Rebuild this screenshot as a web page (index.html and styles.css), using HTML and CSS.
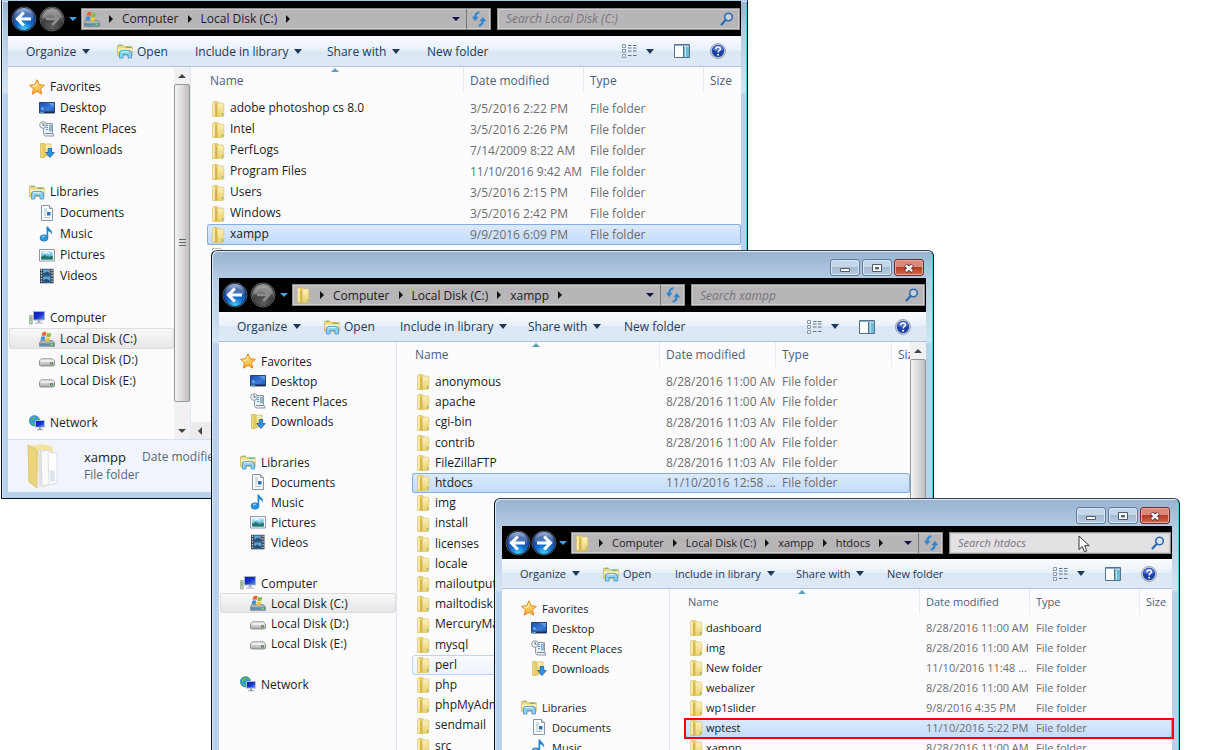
FILE: index.html
```html
<!DOCTYPE html>
<html lang="en">
<head>
<meta charset="utf-8">
<title>Explorer</title>
<link rel="stylesheet" href="styles.css">
</head>
<body>
<svg class="sprite" aria-hidden="true">
  <defs>
    <linearGradient id="gFold" x1="0" x2="1" y1="0" y2="0"><stop offset="0" stop-color="#f6e9a0"/><stop offset=".5" stop-color="#e3c65a"/><stop offset="1" stop-color="#f3df8c"/></linearGradient>
    <linearGradient id="gFold2" x1="0" x2="0" y1="0" y2="1"><stop offset="0" stop-color="#fbf2b8"/><stop offset="1" stop-color="#ecd06a"/></linearGradient>
    <radialGradient id="gBlue" cx=".5" cy=".95" r=".95"><stop offset="0" stop-color="#3fd0ff"/><stop offset=".4" stop-color="#1467c8"/><stop offset=".75" stop-color="#1d4596"/><stop offset="1" stop-color="#a9c0e6"/></radialGradient>
    <radialGradient id="gGray" cx=".5" cy=".9" r=".95"><stop offset="0" stop-color="#5c5c5c"/><stop offset=".5" stop-color="#404040"/><stop offset="1" stop-color="#a2a2a2"/></radialGradient>
    <linearGradient id="gStar" x1="0" x2="0" y1="0" y2="1"><stop offset="0" stop-color="#ffe98a"/><stop offset="1" stop-color="#fbab2c"/></linearGradient>
    <linearGradient id="gDesk" x1="0" x2="1" y1="0" y2="1"><stop offset="0" stop-color="#1c4fae"/><stop offset=".6" stop-color="#3a7bd8"/><stop offset="1" stop-color="#1b4ba6"/></linearGradient>
    <linearGradient id="gScr" x1="0" x2="1" y1="0" y2="1"><stop offset="0" stop-color="#0d1fa8"/><stop offset=".5" stop-color="#1530d0"/><stop offset="1" stop-color="#6aa0f0"/></linearGradient>
    <linearGradient id="gDisk" x1="0" x2="0" y1="0" y2="1"><stop offset="0" stop-color="#f4f4f4"/><stop offset="1" stop-color="#a9a9a9"/></linearGradient>
    <linearGradient id="gSea" x1="0" x2="0" y1="0" y2="1"><stop offset="0" stop-color="#bfe6f8"/><stop offset=".5" stop-color="#6fc0dc"/><stop offset="1" stop-color="#1b6f7a"/></linearGradient>
  </defs>
  <symbol id="folder" viewBox="0 0 16 16">
    <path d="M2.5 1.5l1-1h4l1 1v13l-1 1h-5z" fill="url(#gFold)" stroke="#d6bd5c" stroke-width=".6"/>
    <path d="M7 3l1-1h5l.8.8v12l-.8.6H7z" fill="url(#gFold2)" stroke="#d6bd5c" stroke-width=".6"/>
    <path d="M7.2 3v12l-2 .6V4.4z" fill="#cfae3e" opacity=".75"/>
    <path d="M4 1.4v13" stroke="#fff8d0" stroke-width="1"/>
    <path d="M12.6 12v2.4" stroke="#7fc08a" stroke-width="1.2"/>
  </symbol>
  <symbol id="library" viewBox="0 0 16 16">
    <path d="M.6 2.4h5l1 1.2h8.6v9H.6z" fill="#f0d981" stroke="#cdb258" stroke-width=".8"/>
    <path d="M2 2.2h3.6M9 4.4h5" stroke="#6db36a" stroke-width="1"/>
    <path d="M1 5.4h14.2v3H1z" fill="#fbf3c1"/>
    <path d="M2.5 15V10q0-2.6 2.6-2.6h6.800q2.600 0 2.600 2.600v5h-3.500v-3.500H6v3.500z" fill="#8fd0f2" stroke="#3f93c6" stroke-width=".8"/>
    <path d="M4 9.4q.5-.8 1.500-.8h6" stroke="#dff4ff" stroke-width="1" fill="none"/>
  </symbol>
  <symbol id="star" viewBox="0 0 16 16">
    <path d="M8 .8l2.200 4.900 5.200.6-3.900 3.500 1.200 5.300L8 12.400l-4.700 2.700 1.200-5.300L.6 6.300l5.200-.6z" fill="url(#gStar)" stroke="#e08220" stroke-width="1" stroke-linejoin="round"/>
    <path d="M8 3.500L6.800 7l-3.400.3" stroke="#fff7c8" fill="none"/>
  </symbol>
  <symbol id="desktop" viewBox="0 0 16 16">
    <path d="M.5 2.500h15v10.500H.5z" fill="url(#gDesk)" stroke="#28456f"/>
    <path d="M1 11.500h14v1.500H1z" fill="#1a2c50"/><path d="M2 8.500l1.500-1.500 1.500 1.500-1.500 1.500z" fill="#7dbbe8"/><path d="M1 12.300h4" stroke="#6ab3e2"/>
    <path d="M9 3l6 4V3z" fill="#7db1ee" opacity=".6"/>
  </symbol>
  <symbol id="recent" viewBox="0 0 16 16">
    <path d="M4.500 2.500h9v9l1.500 3.500H6l-1.500-2z" fill="#e9eff4" stroke="#8d9aa6"/>
    <path d="M7 4.500h2M7 6.500h2M7 8.500h2" stroke="#5c9fd0"/><path d="M10.500 4h2v6h-2z" fill="#9cc8e4" stroke="#6a90aa" stroke-width=".6"/><path d="M6 12.500h8" stroke="#7d8c98"/>
    <circle cx="4" cy="4" r="3.300" fill="#f5f7f9" stroke="#8b98a5"/><path d="M4 2v2.200h1.800" stroke="#4f6274" fill="none"/>
  </symbol>
  <symbol id="downloads" viewBox="0 0 16 16">
    <path d="M1.500 1.500h4l1 1v12l-1 1h-4z" fill="url(#gFold)" stroke="#cfb24c" stroke-width=".7"/>
    <path d="M6 3l1-1h5v11l-1 1H6z" fill="url(#gFold2)" stroke="#cfb24c" stroke-width=".7"/>
    <path d="M9.300 6.500h3.400v4h2.500L11 15.600 6.800 10.500h2.500z" fill="#2f93e6" stroke="#1560a8" stroke-width=".8"/>
  </symbol>
  <symbol id="document" viewBox="0 0 16 16">
    <path d="M2.500.5h8l3 3v12h-11z" fill="#fafcfe" stroke="#8895a2"/><path d="M10.500.5v3h3" fill="#d6e0ea" stroke="#8895a2"/>
    <path d="M5 4h3M5 6h3M5 8h2M5 10h2M5 12.500h6" stroke="#a9bccd"/><path d="M8 7h3.500v3.500H8z" fill="#2c73b4"/>
  </symbol>
  <symbol id="music" viewBox="0 0 16 16">
    <ellipse cx="5" cy="12" rx="4" ry="3.200" fill="#2e96dc" stroke="#1a6bb0" stroke-width=".6"/>
    <path d="M7.500 12V.6h1.700c.3 2.600 5 3 3.800 8.400-.4-2.400-1.800-3.400-3.800-3.800V12z" fill="#2486cf"/><path d="M3 11.300q1-1.400 2.800-1" stroke="#b7e2fb" fill="none"/>
  </symbol>
  <symbol id="picture" viewBox="0 0 16 16">
    <path d="M.5 2.500h15v11.500H.5z" fill="#fff" stroke="#8b98a5"/><path d="M2.200 4.200h11.600v8.200H2.200z" fill="url(#gSea)"/>
    <path d="M2.200 10l3.500-2 3.500 2 4.600-1v3.400H2.200z" fill="#22786e"/><path d="M4 6q3-1.500 6 .4" stroke="#fff" fill="none"/>
  </symbol>
  <symbol id="video" viewBox="0 0 16 16">
    <path d="M1 .8h13.500v14.500H1z" fill="#34424e"/><path d="M4.200 1.400h7.200v6H4.200zM4.200 8.500h7.200v6H4.200z" fill="#58a9dc"/>
    <path d="M4.200 5.400l4-2 3.200 2v2H4.200zM4.200 12.500l3-2 4.200 2.500v1.500H4.200z" fill="#274f7a"/><path d="M9.500 2l1.900 1v3z" fill="#d4574a"/>
    <path d="M2.500 1.500v14M13 1.500v14" stroke="#cfd9e0" stroke-width="1.300" stroke-dasharray="1.400 1.400"/>
  </symbol>
  <symbol id="computer" viewBox="0 0 16 16">
    <path d="M.6 5.500h2.600v8.500H.6z" fill="#c9d2c9" stroke="#8b958b" stroke-width=".7"/><path d="M1.900 7v4" stroke="#62b652"/>
    <path d="M4.500 1.500h11v8.500h-11z" fill="url(#gScr)" stroke="#a7b2c2"/><path d="M8.500 10.500h3v2h-3z" fill="#9aa4b2"/><path d="M6 12.500h8v1.300H6z" fill="#b9c2cd"/>
  </symbol>
  <symbol id="sysdisk" viewBox="0 0 16 16">
    <path d="M2 9.500h11.500l2 2.500v3.300H.5V12z" fill="#a9b4b8" stroke="#66757c" stroke-width=".7"/><path d="M1 12.300h14v2.500H1z" fill="#5e8ea6"/><path d="M11.500 13.500h2.500" stroke="#74e052" stroke-width="1.300"/>
    <path d="M3.500 1.500q2-1.500 4 0L6.600 5q-2-1.200-4 0z" fill="#e9602c"/><path d="M8.200 1.800q2 1.200 4.200 0l-1 3.600q-2 1.200-4.100 0z" fill="#86bb3a"/>
    <path d="M2.400 5.800q2-1.300 4 0l-.9 3.500q-2-1.200-4 0z" fill="#3f8edc"/><path d="M7.100 6.200q2 1.200 4.200 0l-1 3.500q-2 1.200-4.100 0z" fill="#f5c32c"/>
  </symbol>
  <symbol id="disk" viewBox="0 0 16 16">
    <path d="M2.500 6.800h11l2 2.200v4l-1 1H1.500l-1-1V9z" fill="url(#gDisk)" stroke="#7c7c7c" stroke-width=".8"/>
    <path d="M1.500 9h13" stroke="#fff"/><path d="M11 10.300h3v2.200h-3z" fill="#5c6a5c"/><path d="M12.500 11v1" stroke="#6ee05a" stroke-width="1.400"/>
  </symbol>
  <symbol id="network" viewBox="0 0 16 16">
    <circle cx="5.500" cy="5.800" r="5.200" fill="#2f9ad6" stroke="#2275ab" stroke-width=".6"/><path d="M2 2.800q3-2.600 5-.8L5 4.500 2.200 6zM2 8q3-1.500 4 1.500L4.500 10.500zM8 1.200l2.500 3H8z" fill="#59bd4d"/>
    <path d="M6.500 5.500h9v6.700h-9z" fill="url(#gScr)" stroke="#b9c5d2" stroke-width=".9"/><path d="M10 12.500h2v1.800h-2zM8 14.200h6v1H8z" fill="#8e9aa8"/>
  </symbol>
  <symbol id="file" viewBox="0 0 16 16"><path d="M2.500.5h8l3 3v12h-11z" fill="#fff" stroke="#a3a3a3" stroke-dasharray="2 1"/></symbol>
  <symbol id="back" viewBox="0 0 26 26">
    <circle cx="13" cy="13" r="12" fill="#07111f" stroke="#5e6c80" stroke-width=".8"/><circle cx="13" cy="13" r="11" fill="url(#gBlue)"/>
    <path d="M3.500 12A9.600 9.600 0 0 1 22.500 12q-9 2.500-19 0z" fill="#fff" opacity=".22"/>
    <path d="M12.800 6.500L6.500 13l6.300 6.500M7.500 13H20" stroke="#fff" stroke-width="3.200" fill="none"/>
  </symbol>
  <symbol id="forward" viewBox="0 0 26 26">
    <circle cx="13" cy="13" r="12" fill="#07111f" stroke="#5e6c80" stroke-width=".8"/><circle cx="13" cy="13" r="11" fill="url(#gBlue)"/>
    <path d="M3.500 12A9.600 9.600 0 0 1 22.500 12q-9 2.500-19 0z" fill="#fff" opacity=".22"/>
    <path d="M13.200 6.500l6.300 6.500-6.300 6.500M18.500 13H6" stroke="#fff" stroke-width="3.200" fill="none"/>
  </symbol>
  <symbol id="forward-off" viewBox="0 0 26 26">
    <circle cx="13" cy="13" r="12" fill="#111" stroke="#777" stroke-width=".8"/><circle cx="13" cy="13" r="11" fill="url(#gGray)"/>
    <path d="M3.500 12A9.600 9.600 0 0 1 22.500 12q-9 2.500-19 0z" fill="#fff" opacity=".25"/>
    <path d="M13.200 7l5.800 6-5.800 6M18 13H7" stroke="#8d8d8d" stroke-width="2.600" fill="none"/>
  </symbol>
  <symbol id="refresh" viewBox="0 0 16 16">
    <path d="M8.300 1.300Q4.200 2 4.200 6.800M7.700 14.700q4.100-.7 4.100-5.500" stroke="#2f84cc" stroke-width="2" fill="none"/>
    <path d="M.8 5.800h6.800L4.200 10zM8.400 10.200h6.800L11.800 6z" fill="#2f84cc"/>
  </symbol>
  <symbol id="search" viewBox="0 0 16 16">
    <circle cx="9.500" cy="6" r="3.800" fill="#dcecf8" fill-opacity=".5" stroke="#2b6cb0" stroke-width="1.600"/><path d="M6.700 9L2.500 13.500" stroke="#2b6cb0" stroke-width="2.200" stroke-linecap="round"/>
  </symbol>
  <symbol id="views" viewBox="0 0 16 16">
    <path d="M1.500 1.500h3v3h-3zM1.500 6.500h3v3h-3zM1.500 11.500h3v3h-3z" fill="#eef2f6" stroke="#8c99a8"/>
    <path d="M7 2.500h3.500M12 2.500h3.500M7 5h3.500M12 5h3.500M7 8h3.500M12 8h3.500M7 12.500h3.500M12 12.500h3.500" stroke="#5f7088"/>
  </symbol>
  <symbol id="pane" viewBox="0 0 16 16">
    <path d="M.5 1.500h15v13H.5z" fill="#fbfdff" stroke="#54718f"/><path d="M1 2.500h14" stroke="#8fa9c2"/><path d="M9.500 3v11.500" stroke="#54718f"/><path d="M10 3.500h5v10.500h-5z" fill="#6fbbd6"/><path d="M11.500 4v10" stroke="#b9e3ef"/>
  </symbol>
  <symbol id="help" viewBox="0 0 16 16">
    <circle cx="8" cy="8" r="7.500" fill="#d5d9e2" stroke="#8890a0" stroke-width=".8"/><circle cx="8" cy="8" r="6.200" fill="#1d3fa8"/><path d="M2.600 7a5.500 5.500 0 0 1 10.800 0q-5 2-10.800 0z" fill="#6f8fe0" opacity=".7"/>
    <path d="M5.800 6.300q.1-2.300 2.300-2.300 2.200 0 2.200 2 0 1.300-1.300 1.900-.9.400-.9 1.600" stroke="#fff" stroke-width="1.500" fill="none"/><circle cx="8.100" cy="11.700" r="1" fill="#fff"/>
  </symbol>
  <symbol id="minimize" viewBox="0 0 16 16"><path d="M3.500 8.500h9v3h-9z" fill="#fff" stroke="#4c5a6c"/></symbol>
  <symbol id="maximize" viewBox="0 0 16 16"><path d="M3.500 4.500h9v7h-9z" fill="#fff" stroke="#4c5a6c"/><path d="M6.500 7.500h3v1.500h-3z" fill="#7d93ad" stroke="#4c5a6c"/></symbol>
  <symbol id="close" viewBox="0 0 16 16"><path d="M4.500 5l7 6.500M11.500 5l-7 6.500" stroke="#5c3038" stroke-width="4"/><path d="M4.800 5.300l6.400 5.900M11.200 5.300l-6.400 5.900" stroke="#fff" stroke-width="2.300"/></symbol>
</svg>

<main class="desktop">

  <section class="window window-c" aria-label="Local Disk (C:)">
    <div class="navbar">
      <button class="round" aria-label="Back"><svg><use href="#back"/></svg></button>
      <button class="round" aria-label="Forward"><svg><use href="#forward-off"/></svg></button>
      <button class="history tri" aria-label="Recent pages"></button>
      <div class="address">
        <svg class="icon"><use href="#sysdisk"/></svg>
        <button class="crumb">Computer</button><button class="crumb">Local Disk (C:)</button><span class="crumb-end"></span>
        <button class="drop tri" aria-label="Previous locations"></button>
        <button class="refresh" aria-label="Refresh"><svg class="icon"><use href="#refresh"/></svg></button>
      </div>
      <label class="search"><input type="text" aria-label="Search" placeholder="Search Local Disk (C:)"><svg class="icon"><use href="#search"/></svg></label>
    </div>
    <div class="toolbar">
      <button class="menu">Organize</button>
      <button class="open"><svg class="icon"><use href="#library"/></svg>Open</button>
      <button class="menu">Include in library</button>
      <button class="menu">Share with</button>
      <button>New folder</button>
      <div class="tools">
        <button class="menu views" aria-label="Views"><svg class="icon"><use href="#views"/></svg></button>
        <button aria-label="Preview pane"><svg class="icon"><use href="#pane"/></svg></button>
        <button aria-label="Help"><svg class="icon"><use href="#help"/></svg></button>
      </div>
    </div>
    <div class="body">
      <nav class="sidebar">
        <ul>
          <li><a href="#"><svg class="icon"><use href="#star"/></svg>Favorites</a></li>
          <li class="sub"><a href="#"><svg class="icon"><use href="#desktop"/></svg>Desktop</a></li>
          <li class="sub"><a href="#"><svg class="icon"><use href="#recent"/></svg>Recent Places</a></li>
          <li class="sub"><a href="#"><svg class="icon"><use href="#downloads"/></svg>Downloads</a></li>
        </ul>
        <ul>
          <li><a href="#"><svg class="icon"><use href="#library"/></svg>Libraries</a></li>
          <li class="sub"><a href="#"><svg class="icon"><use href="#document"/></svg>Documents</a></li>
          <li class="sub"><a href="#"><svg class="icon"><use href="#music"/></svg>Music</a></li>
          <li class="sub"><a href="#"><svg class="icon"><use href="#picture"/></svg>Pictures</a></li>
          <li class="sub"><a href="#"><svg class="icon"><use href="#video"/></svg>Videos</a></li>
        </ul>
        <ul>
          <li><a href="#"><svg class="icon"><use href="#computer"/></svg>Computer</a></li>
          <li class="sub current"><a href="#"><svg class="icon"><use href="#sysdisk"/></svg>Local Disk (C:)</a></li>
          <li class="sub"><a href="#"><svg class="icon"><use href="#disk"/></svg>Local Disk (D:)</a></li>
          <li class="sub"><a href="#"><svg class="icon"><use href="#disk"/></svg>Local Disk (E:)</a></li>
        </ul>
        <ul>
          <li><a href="#"><svg class="icon"><use href="#network"/></svg>Network</a></li>
        </ul>
      </nav>
      <div class="scrollbar"><span class="arrow up"></span><span class="thumb"><i></i></span><span class="arrow down"></span></div>
      <div class="files">
        <table>
          <colgroup><col class="c-name"><col class="c-date"><col class="c-type"><col></colgroup>
          <thead><tr><th class="sorted">Name</th><th>Date modified</th><th>Type</th><th>Size</th></tr></thead>
          <tbody>
            <tr><td><svg class="icon"><use href="#folder"/></svg>adobe photoshop cs 8.0</td><td>3/5/2016 2:22 PM</td><td>File folder</td><td></td></tr>
            <tr><td><svg class="icon"><use href="#folder"/></svg>Intel</td><td>3/5/2016 2:26 PM</td><td>File folder</td><td></td></tr>
            <tr><td><svg class="icon"><use href="#folder"/></svg>PerfLogs</td><td>7/14/2009 8:22 AM</td><td>File folder</td><td></td></tr>
            <tr><td><svg class="icon"><use href="#folder"/></svg>Program Files</td><td>11/10/2016 9:42 AM</td><td>File folder</td><td></td></tr>
            <tr><td><svg class="icon"><use href="#folder"/></svg>Users</td><td>3/5/2016 2:15 PM</td><td>File folder</td><td></td></tr>
            <tr><td><svg class="icon"><use href="#folder"/></svg>Windows</td><td>3/5/2016 2:42 PM</td><td>File folder</td><td></td></tr>
            <tr class="selected"><td><svg class="icon"><use href="#folder"/></svg>xampp</td><td>9/9/2016 6:09 PM</td><td>File folder</td><td></td></tr>
            <tr><td><svg class="icon"><use href="#file"/></svg></td><td></td><td></td><td></td></tr>
          </tbody>
        </table>
        <div class="hscroll"><span class="arrow left"></span></div>
      </div>
    </div>
    <footer class="details">
      <svg class="preview" viewBox="0 0 36 48">
        <path d="M3 4l14-2 10 3v36l-10 4z" fill="#f3e3a0"/>
        <path d="M12 8l11 1 1 33-11 3z" fill="#dfe3e8"/><path d="M15 9l9-1 1 34-9 2z" fill="#fafafa" stroke="#cdd2d8" stroke-width=".7"/>
        <path d="M22 10l9 1v30l-8 2z" fill="#fff" stroke="#cdd2d8" stroke-width=".7"/><path d="M24 28l5 1v10l-5 1z" fill="#dde6ee"/>
        <path d="M2 3l9 5v38l-8-6z" fill="#ecd47c" stroke="#d6bb5e" stroke-width=".7"/>
      </svg>
      <dl><dt class="title">xampp</dt><dd>Date modified</dd><dt>File folder</dt></dl>
    </footer>
  </section>

  <section class="window window-x" aria-label="xampp">
    <div class="titlebar">
      <button aria-label="Minimize"><svg class="icon"><use href="#minimize"/></svg></button>
      <button aria-label="Maximize"><svg class="icon"><use href="#maximize"/></svg></button>
      <button class="close" aria-label="Close"><svg class="icon"><use href="#close"/></svg></button>
    </div>
    <div class="navbar">
      <button class="round" aria-label="Back"><svg><use href="#back"/></svg></button>
      <button class="round" aria-label="Forward"><svg><use href="#forward-off"/></svg></button>
      <button class="history tri" aria-label="Recent pages"></button>
      <div class="address">
        <svg class="icon"><use href="#folder"/></svg>
        <button class="crumb">Computer</button><button class="crumb">Local Disk (C:)</button><button class="crumb">xampp</button><span class="crumb-end"></span>
        <button class="drop tri" aria-label="Previous locations"></button>
        <button class="refresh" aria-label="Refresh"><svg class="icon"><use href="#refresh"/></svg></button>
      </div>
      <label class="search"><input type="text" aria-label="Search" placeholder="Search xampp"><svg class="icon"><use href="#search"/></svg></label>
    </div>
    <div class="toolbar">
      <button class="menu">Organize</button>
      <button class="open"><svg class="icon"><use href="#library"/></svg>Open</button>
      <button class="menu">Include in library</button>
      <button class="menu">Share with</button>
      <button>New folder</button>
      <div class="tools">
        <button class="menu views" aria-label="Views"><svg class="icon"><use href="#views"/></svg></button>
        <button aria-label="Preview pane"><svg class="icon"><use href="#pane"/></svg></button>
        <button aria-label="Help"><svg class="icon"><use href="#help"/></svg></button>
      </div>
    </div>
    <div class="body">
      <nav class="sidebar">
        <ul>
          <li><a href="#"><svg class="icon"><use href="#star"/></svg>Favorites</a></li>
          <li class="sub"><a href="#"><svg class="icon"><use href="#desktop"/></svg>Desktop</a></li>
          <li class="sub"><a href="#"><svg class="icon"><use href="#recent"/></svg>Recent Places</a></li>
          <li class="sub"><a href="#"><svg class="icon"><use href="#downloads"/></svg>Downloads</a></li>
        </ul>
        <ul>
          <li><a href="#"><svg class="icon"><use href="#library"/></svg>Libraries</a></li>
          <li class="sub"><a href="#"><svg class="icon"><use href="#document"/></svg>Documents</a></li>
          <li class="sub"><a href="#"><svg class="icon"><use href="#music"/></svg>Music</a></li>
          <li class="sub"><a href="#"><svg class="icon"><use href="#picture"/></svg>Pictures</a></li>
          <li class="sub"><a href="#"><svg class="icon"><use href="#video"/></svg>Videos</a></li>
        </ul>
        <ul>
          <li><a href="#"><svg class="icon"><use href="#computer"/></svg>Computer</a></li>
          <li class="sub current"><a href="#"><svg class="icon"><use href="#sysdisk"/></svg>Local Disk (C:)</a></li>
          <li class="sub"><a href="#"><svg class="icon"><use href="#disk"/></svg>Local Disk (D:)</a></li>
          <li class="sub"><a href="#"><svg class="icon"><use href="#disk"/></svg>Local Disk (E:)</a></li>
        </ul>
        <ul>
          <li><a href="#"><svg class="icon"><use href="#network"/></svg>Network</a></li>
        </ul>
      </nav>
      <div class="files">
        <table>
          <colgroup><col class="c-name"><col class="c-date"><col class="c-type"><col></colgroup>
          <thead><tr><th class="sorted">Name</th><th>Date modified</th><th>Type</th><th>Size</th></tr></thead>
          <tbody>
            <tr><td><svg class="icon"><use href="#folder"/></svg>anonymous</td><td>8/28/2016 11:00 AM</td><td>File folder</td><td></td></tr>
            <tr><td><svg class="icon"><use href="#folder"/></svg>apache</td><td>8/28/2016 11:00 AM</td><td>File folder</td><td></td></tr>
            <tr><td><svg class="icon"><use href="#folder"/></svg>cgi-bin</td><td>8/28/2016 11:03 AM</td><td>File folder</td><td></td></tr>
            <tr><td><svg class="icon"><use href="#folder"/></svg>contrib</td><td>8/28/2016 11:00 AM</td><td>File folder</td><td></td></tr>
            <tr><td><svg class="icon"><use href="#folder"/></svg>FileZillaFTP</td><td>8/28/2016 11:03 AM</td><td>File folder</td><td></td></tr>
            <tr class="selected"><td><svg class="icon"><use href="#folder"/></svg>htdocs</td><td>11/10/2016 12:58 ...</td><td>File folder</td><td></td></tr>
            <tr><td><svg class="icon"><use href="#folder"/></svg>img</td><td></td><td></td><td></td></tr>
            <tr><td><svg class="icon"><use href="#folder"/></svg>install</td><td></td><td></td><td></td></tr>
            <tr><td><svg class="icon"><use href="#folder"/></svg>licenses</td><td></td><td></td><td></td></tr>
            <tr><td><svg class="icon"><use href="#folder"/></svg>locale</td><td></td><td></td><td></td></tr>
            <tr><td><svg class="icon"><use href="#folder"/></svg>mailoutput</td><td></td><td></td><td></td></tr>
            <tr><td><svg class="icon"><use href="#folder"/></svg>mailtodisk</td><td></td><td></td><td></td></tr>
            <tr><td><svg class="icon"><use href="#folder"/></svg>MercuryMail</td><td></td><td></td><td></td></tr>
            <tr><td><svg class="icon"><use href="#folder"/></svg>mysql</td><td></td><td></td><td></td></tr>
            <tr class="hover"><td><svg class="icon"><use href="#folder"/></svg>perl</td><td></td><td></td><td></td></tr>
            <tr><td><svg class="icon"><use href="#folder"/></svg>php</td><td></td><td></td><td></td></tr>
            <tr><td><svg class="icon"><use href="#folder"/></svg>phpMyAdmin</td><td></td><td></td><td></td></tr>
            <tr><td><svg class="icon"><use href="#folder"/></svg>sendmail</td><td></td><td></td><td></td></tr>
            <tr><td><svg class="icon"><use href="#folder"/></svg>src</td><td></td><td></td><td></td></tr>
          </tbody>
        </table>
      </div>
      <div class="scrollbar"><span class="arrow up"></span><span class="thumb"></span></div>
    </div>
  </section>

  <section class="window window-h" aria-label="htdocs">
    <div class="titlebar">
      <button aria-label="Minimize"><svg class="icon"><use href="#minimize"/></svg></button>
      <button aria-label="Maximize"><svg class="icon"><use href="#maximize"/></svg></button>
      <button class="close" aria-label="Close"><svg class="icon"><use href="#close"/></svg></button>
    </div>
    <div class="navbar">
      <button class="round" aria-label="Back"><svg><use href="#back"/></svg></button>
      <button class="round" aria-label="Forward"><svg><use href="#forward"/></svg></button>
      <button class="history tri" aria-label="Recent pages"></button>
      <div class="address">
        <svg class="icon"><use href="#folder"/></svg>
        <button class="crumb">Computer</button><button class="crumb">Local Disk (C:)</button><button class="crumb">xampp</button><button class="crumb">htdocs</button><span class="crumb-end"></span>
        <button class="drop tri" aria-label="Previous locations"></button>
        <button class="refresh" aria-label="Refresh"><svg class="icon"><use href="#refresh"/></svg></button>
      </div>
      <label class="search lit"><input type="text" aria-label="Search" placeholder="Search htdocs"><svg class="icon"><use href="#search"/></svg></label>
    </div>
    <div class="toolbar">
      <button class="menu">Organize</button>
      <button class="open"><svg class="icon"><use href="#library"/></svg>Open</button>
      <button class="menu">Include in library</button>
      <button class="menu">Share with</button>
      <button>New folder</button>
      <div class="tools">
        <button class="menu views" aria-label="Views"><svg class="icon"><use href="#views"/></svg></button>
        <button aria-label="Preview pane"><svg class="icon"><use href="#pane"/></svg></button>
        <button aria-label="Help"><svg class="icon"><use href="#help"/></svg></button>
      </div>
    </div>
    <div class="body">
      <nav class="sidebar">
        <ul>
          <li><a href="#"><svg class="icon"><use href="#star"/></svg>Favorites</a></li>
          <li class="sub"><a href="#"><svg class="icon"><use href="#desktop"/></svg>Desktop</a></li>
          <li class="sub"><a href="#"><svg class="icon"><use href="#recent"/></svg>Recent Places</a></li>
          <li class="sub"><a href="#"><svg class="icon"><use href="#downloads"/></svg>Downloads</a></li>
        </ul>
        <ul>
          <li><a href="#"><svg class="icon"><use href="#library"/></svg>Libraries</a></li>
          <li class="sub"><a href="#"><svg class="icon"><use href="#document"/></svg>Documents</a></li>
          <li class="sub"><a href="#"><svg class="icon"><use href="#music"/></svg>Music</a></li>
        </ul>
      </nav>
      <div class="files">
        <table>
          <colgroup><col class="c-name"><col class="c-date"><col class="c-type"><col></colgroup>
          <thead><tr><th class="sorted">Name</th><th>Date modified</th><th>Type</th><th>Size</th></tr></thead>
          <tbody>
            <tr><td><svg class="icon"><use href="#folder"/></svg>dashboard</td><td>8/28/2016 11:00 AM</td><td>File folder</td><td></td></tr>
            <tr><td><svg class="icon"><use href="#folder"/></svg>img</td><td>8/28/2016 11:00 AM</td><td>File folder</td><td></td></tr>
            <tr><td><svg class="icon"><use href="#folder"/></svg>New folder</td><td>11/10/2016 11:48 ...</td><td>File folder</td><td></td></tr>
            <tr><td><svg class="icon"><use href="#folder"/></svg>webalizer</td><td>8/28/2016 11:00 AM</td><td>File folder</td><td></td></tr>
            <tr><td><svg class="icon"><use href="#folder"/></svg>wp1slider</td><td>9/8/2016 4:35 PM</td><td>File folder</td><td></td></tr>
            <tr class="selected"><td><svg class="icon"><use href="#folder"/></svg>wptest</td><td>11/10/2016 5:22 PM</td><td>File folder</td><td></td></tr>
            <tr><td><svg class="icon"><use href="#folder"/></svg>xampp</td><td>8/28/2016 11:00 AM</td><td>File folder</td><td></td></tr>
          </tbody>
        </table>
      </div>
    </div>
    <div class="marker"></div>
    <svg class="pointer" viewBox="0 0 12 18"><path d="M1 1v13.500l3.200-3 2.300 5.300 2.300-1-2.200-5.100h4.600z" fill="#fff" stroke="#333" stroke-linejoin="round"/></svg>
  </section>

</main>
</body>
</html>
```

FILE: styles.css
```css
* { box-sizing: border-box; }
body { margin: 0; background: #fff; font-family: "Open Sans", "Noto Sans", sans-serif; font-size: 12px; color: #1b1b1b; }
button { border: 0; padding: 0; margin: 0; background: none; font: inherit; color: inherit; text-align: left; white-space: nowrap; }
ul, dl, dd { margin: 0; padding: 0; list-style: none; }
a { color: inherit; text-decoration: none; }
.sprite { position: absolute; width: 0; height: 0; }
.icon { width: 16px; height: 16px; flex: none; display: block; }

.desktop { position: relative; height: 100vh; overflow: hidden; }

/* windows */
.window {
  position: absolute; display: flex; flex-direction: column;
  padding: 0 7px; border: 1px solid #06121a; border-top-color: #3a4450;
  background: linear-gradient(#98b2d0, #b4cbe3 28px, #d3e3f3 90px, #b9d1ea 94px);
  box-shadow: inset 1px 1px 0 #d9e8f6, inset -1px 0 0 #58c4e0;
}
.window-c {
  --row: 21px; --gap: 21px; --indent: 20px; --side: 166px; --name: 256px; --col: 120px; --head: 31px;
  --search: 243px; --t1: 91px; --t2: 78px; --t3: 132px; --t4: 100px; --nav: 35px; --bar: 31px;
  left: 1px; top: 0; width: 747px; height: 499px; padding: 0 6px 6px; border-top-color: #a9cbe6;
}
.window-x {
  --row: 20px; --gap: 21px; --indent: 20px; --side: 178px; --name: 247px; --col: 116px; --head: 30px;
  --search: 234px; --t1: 87px; --t2: 76px; --t3: 128px; --t4: 96px; --nav: 34px; --bar: 30px;
  left: 211px; top: 250px; width: 723px; bottom: 0; border-bottom: 0; border-radius: 6px 6px 0 0;
}
.window-h {
  --row: 20px; --gap: 19px; --indent: 18px; --side: 168px; --name: 234px; --col: 110px; --head: 29px;
  --search: 222px; --t1: 83px; --t2: 72px; --t3: 121px; --t4: 91px; --nav: 33px; --bar: 30px;
  left: 494px; top: 498px; width: 686px; bottom: 0; border-bottom: 0; border-radius: 6px 6px 0 0;
  font-size: 11px;
}

.titlebar { display: flex; justify-content: flex-end; gap: 2px; height: 27px; padding: 8px 2px 0; flex: none; }
.titlebar button {
  width: 30px; height: 17px; display: flex; justify-content: center; align-items: center;
  border: 1px solid #5f7a98; border-radius: 3px; box-shadow: inset 0 0 0 1px #d8e6f3;
  background: linear-gradient(#c4d6e8 50%, #a2bad3 50%, #b7cde3);
}
.titlebar .close { border-color: #6d2a2e; box-shadow: inset 0 0 0 1px #e3a79c; background: linear-gradient(#d98a7c 45%, #b93a26 50%, #cf6a4a); }

/* navigation */
.navbar { display: flex; align-items: center; height: var(--nav); flex: none; background: #000; padding: 0 1px 0 3px; }
.round { width: 26px; height: 26px; margin-right: 2px; flex: none; }
.window-h .round { margin-right: 0; }
.round svg { display: block; width: 26px; height: 26px; }
.tri::after { content: ""; display: block; border: 4px solid transparent; border-top-color: currentColor; border-bottom: 0; }
.history { width: 8px; margin: 0 4px 0 2px; color: #4aa0dc; flex: none; }
.address, .search { display: flex; align-items: center; height: 22px; background: #b8b5b8; border: 1px solid #8f8d90; box-shadow: inset 0 0 0 1px #cfcdd0; }
.address { flex: 1; min-width: 0; padding-left: 2px; margin-right: 6px; color: #1c1c1c; }
.crumb { display: flex; align-items: center; }
.crumb::before, .crumb-end::before { content: ""; border: 4px solid transparent; border-left-color: #111; border-right: 0; margin: 0 9px; }
.crumb-end { flex: 1; display: flex; }
.drop { color: #10104a; margin-right: 6px; }
.refresh { height: 20px; width: 24px; border-left: 1px solid #77757a; display: flex; justify-content: center; align-items: center; }
.search { width: var(--search); flex: none; padding: 0 4px 0 8px; }
.search.lit { background: #e4e1e4; }
.search input { flex: 1; min-width: 0; border: 0; padding: 0; background: none; outline: 0; font: inherit; font-style: italic; }
.search input::placeholder { color: #77757a; opacity: 1; }

/* toolbar */
.toolbar {
  display: grid; grid-template-columns: var(--t1) var(--t2) var(--t3) var(--t4) auto 1fr; align-items: center;
  height: var(--bar); flex: none; padding: 0 15px 0 18px; color: #1e395b;
  border-bottom: 1px solid #b2c3d8; background: linear-gradient(#fafcfe, #e7f0fa 48%, #dce7f4 50%, #dde9f7);
}
.toolbar button { display: flex; align-items: center; }
.toolbar .open { gap: 4px; }
.menu::after { content: ""; border: 4px solid transparent; border-top: 5px solid #1e395b; border-bottom: 0; margin-left: 6px; }
.views::after { margin-left: 9px; }
.tools { display: flex; justify-content: flex-end; gap: 20px; }

/* panes */
.body { display: flex; flex: 1; min-height: 0; background: #fcfcfe; overflow: hidden; }
.sidebar { width: var(--side); flex: none; padding: 9px 0 0 1px; display: flex; flex-direction: column; gap: var(--gap); }
.window-x .sidebar, .window-h .sidebar { border-right: 1px solid #dce8f2; }
.sidebar a { display: flex; align-items: center; gap: 5px; height: var(--row); padding-left: calc(var(--indent) - 1px); white-space: nowrap; border: 1px solid transparent; }
.sidebar .sub a { padding-left: calc(var(--indent) + 9px); }
.sidebar .current a { border-color: #dcdcdc; border-radius: 2px; background: linear-gradient(#f8f8f8, #e6e6e6); }

.scrollbar { width: 16px; flex: none; display: flex; flex-direction: column; background: #f1f1f3; }
.arrow { height: 17px; flex: none; display: flex; align-items: center; justify-content: center; }
.arrow::after { content: ""; border: 4px solid transparent; }
.up::after { border-bottom-color: #444; border-top: 0; }
.down::after { border-top-color: #444; border-bottom: 0; }
.left::after { border-right-color: #444; border-left: 0; }
.thumb { flex: 1; display: flex; align-items: center; justify-content: center; border: 1px solid #989898; border-radius: 2px; background: linear-gradient(90deg, #f5f5f5, #dcdcdc 50%, #bdbdbd); }
.thumb i { width: 7px; height: 8px; background: repeating-linear-gradient(#666 0 1px, transparent 1px 3px); }
.window-c .down { height: 37px; padding-top: 20px; }

.files { flex: 1; min-width: 0; padding-left: 15px; overflow: hidden; display: flex; flex-direction: column; justify-content: space-between; }
.window-c .files { border-left: 1px solid #dce8f2; padding-left: 16px; }
table { width: 100%; table-layout: fixed; border-collapse: separate; border-spacing: 0; }
.window-x table { height: 414px; flex: none; }
.c-name { width: var(--name); }
.c-date, .c-type { width: var(--col); }
th { position: relative; height: var(--head); padding: 0 0 5px 7px; text-align: left; font-weight: 400; color: #4c607a; white-space: nowrap; overflow: hidden; background: linear-gradient(#e2e9f2, #e8eef5) 0 0 / 1px 25px no-repeat; }
th:first-child { padding-left: 3px; background: none; }
.sorted::after { content: ""; position: absolute; left: 50%; top: 1px; margin-left: -4px; border: 4px solid transparent; border-top: 0; border-bottom-color: #5f9fbe; }
td { height: var(--row); padding: 0 0 0 7px; color: #6d6d6d; white-space: nowrap; overflow: hidden; line-height: 18px; }
.window-x td { height: auto; }
td:first-child { padding-left: 3px; color: #1b1b1b; }
td .icon { display: inline-block; vertical-align: middle; margin: 0 4px 1px 0; }
.window-h td .icon { margin-right: 2px; }
.selected { background: linear-gradient(#dcebfc, #c1dbfc); outline: 1px solid #84acdd; outline-offset: -1px; border-radius: 3px; }
.hover { background: linear-gradient(#fafbfd, #ebf3fd); outline: 1px solid #b8d6fb; outline-offset: -1px; border-radius: 3px; }
.hscroll { height: 17px; flex: none; margin-left: -16px; background: #ececee; }
.hscroll .arrow { width: 17px; }

.details { display: flex; align-items: center; height: 53px; flex: none; padding-left: 18px; background: #f1f5fb; border-top: 1px solid #d5e0ee; color: #5a6779; }
.preview { width: 36px; height: 48px; margin-right: 22px; }
.details dl { display: grid; grid-template-columns: 58px auto; line-height: 18px; }
.details .title { color: #1b1b1b; font-size: 13px; }

/* overlays */
.marker { position: absolute; left: 189px; right: 5px; top: 219px; height: 21px; border: 2px solid #f00; }
.pointer { position: absolute; left: 583px; top: 36px; width: 12px; height: 18px; }
```
